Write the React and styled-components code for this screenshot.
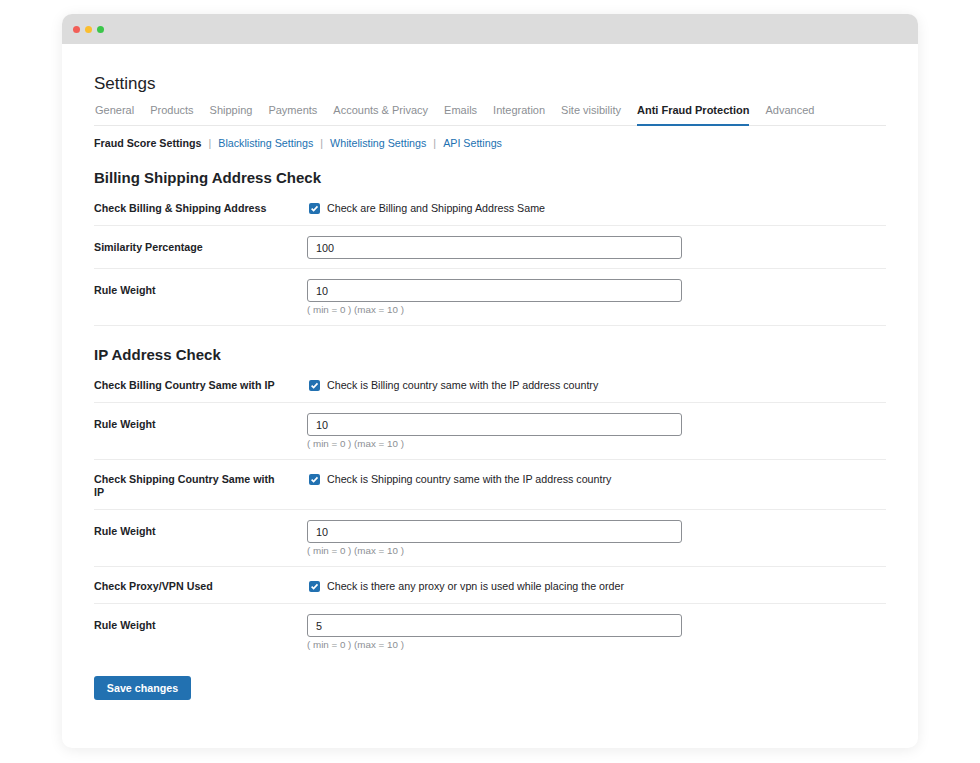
import React from "react";
import styled, { createGlobalStyle } from "styled-components";

const GlobalStyle = createGlobalStyle`
  html, body {
    margin: 0;
    padding: 0;
    background: #fff;
  }
  body {
    font-family: "Liberation Sans", Arial, sans-serif;
    color: #1d2327;
  }
  * {
    box-sizing: border-box;
  }
`;

const Page = styled.div`
  padding: 14px 62px 15px 62px;
`;

const Frame = styled.div`
  width: 856px;
  border-radius: 10px;
  background: #fff;
  overflow: hidden;
  box-shadow: 0 2px 14px rgba(0, 0, 0, 0.08);
`;

const TitleBar = styled.div`
  height: 30px;
  background: #dcdcdc;
  display: flex;
  align-items: center;
  gap: 5px;
  padding-left: 11px;
`;

const Dot = styled.span`
  width: 7px;
  height: 7px;
  border-radius: 50%;
  background: ${({ color }) => color};
`;

const Content = styled.div`
  padding: 29px 32px 48px 32px;
`;

const PageTitle = styled.h1`
  margin: 0;
  font-size: 17px;
  line-height: 22px;
  font-weight: 400;
  color: #1d2327;
`;

const Tabs = styled.nav`
  display: flex;
  gap: 16px;
  margin-top: 6px;
  padding-left: 1px;
  border-bottom: 1px solid #e8e8e8;
`;

const Tab = styled.span`
  font-size: 11px;
  line-height: 14px;
  padding: 2px 0 7px;
  color: ${({ active }) => (active ? "#1d2327" : "#8c8f94")};
  font-weight: ${({ active }) => (active ? 700 : 400)};
  border-bottom: 2px solid ${({ active }) => (active ? "#2271b1" : "transparent")};
  margin-bottom: -1px;
`;

const SubNav = styled.div`
  display: flex;
  align-items: center;
  margin-top: 10px;
  font-size: 10.7px;
  line-height: 14px;
`;

const SubLink = styled.span`
  color: ${({ current }) => (current ? "#1d2327" : "#2271b1")};
  font-weight: ${({ current }) => (current ? 700 : 400)};
`;

const Sep = styled.span`
  color: #a7aaad;
  padding: 0 7px;
`;

const SectionTitle = styled.h2`
  margin: ${({ first }) => (first ? "19px 0 2px" : "20px 0 2px")};
  font-size: 15px;
  line-height: 18px;
  font-weight: 700;
  color: #1d2327;
`;

const Row = styled.div`
  display: grid;
  grid-template-columns: 213px 375px;
  align-items: start;
  padding: ${({ check }) => (check ? "13px 0 10px" : "10px 0 9px")};
  border-bottom: ${({ last }) => (last ? "none" : "1px solid #ececec")};
`;

const Label = styled.div`
  font-size: 10.7px;
  font-weight: 700;
  line-height: 13px;
  padding-right: 24px;
  margin-top: ${({ check }) => (check ? "0" : "5px")};
`;

const CheckLine = styled.label`
  display: flex;
  align-items: center;
  gap: 7px;
  font-size: 10.7px;
  line-height: 13px;
  padding-left: 2px;
`;

const Box = styled.span`
  width: 11px;
  height: 11px;
  border-radius: 2px;
  background: #2271b1;
  display: flex;
  align-items: center;
  justify-content: center;
`;

const Field = styled.div`
  display: flex;
  flex-direction: column;
`;

const Input = styled.div`
  height: 23px;
  border: 1px solid #8c8f94;
  border-radius: 3px;
  padding: 0 8px;
  display: flex;
  align-items: center;
  font-size: 10.8px;
  color: #1d2327;
`;

const Help = styled.div`
  font-size: 9.8px;
  line-height: 12px;
  color: #8c8f94;
  margin-top: 2px;
`;

const SaveButton = styled.button`
  margin-top: 16px;
  width: 97px;
  height: 24px;
  border: none;
  border-radius: 3px;
  background: #2271b1;
  color: #fff;
  font-family: "Liberation Sans", Arial, sans-serif;
  font-weight: 700;
  font-size: 10.7px;
  padding: 0;
`;

const tabs = [
  "General",
  "Products",
  "Shipping",
  "Payments",
  "Accounts & Privacy",
  "Emails",
  "Integration",
  "Site visibility",
  "Anti Fraud Protection",
  "Advanced",
];

const Check = ({ children }) => (
  <CheckLine>
    <Box>
      <svg width="9" height="9" viewBox="0 0 10 10">
        <path d="M1.8 5.2 L4 7.4 L8.3 2.6" fill="none" stroke="#fff" strokeWidth="1.8" />
      </svg>
    </Box>
    {children}
  </CheckLine>
);

const CheckRow = ({ label, text, last }) => (
  <Row check last={last}>
    <Label check>{label}</Label>
    <Check>{text}</Check>
  </Row>
);

const InputRow = ({ label, value, help, last }) => (
  <Row last={last}>
    <Label>{label}</Label>
    <Field>
      <Input>{value}</Input>
      {help && <Help>( min = 0 ) (max = 10 )</Help>}
    </Field>
  </Row>
);

export default function App() {
  return (
    <>
      <GlobalStyle />
      <Page>
        <Frame>
          <TitleBar>
            <Dot color="#f25f58" />
            <Dot color="#fbbe2f" />
            <Dot color="#3bc64a" />
          </TitleBar>
          <Content>
            <PageTitle>Settings</PageTitle>
            <Tabs>
              {tabs.map((t) => (
                <Tab key={t} active={t === "Anti Fraud Protection"}>
                  {t}
                </Tab>
              ))}
            </Tabs>
            <SubNav>
              <SubLink current>Fraud Score Settings</SubLink>
              <Sep>|</Sep>
              <SubLink>Blacklisting Settings</SubLink>
              <Sep>|</Sep>
              <SubLink>Whitelisting Settings</SubLink>
              <Sep>|</Sep>
              <SubLink>API Settings</SubLink>
            </SubNav>

            <SectionTitle first>Billing Shipping Address Check</SectionTitle>
            <CheckRow
              label="Check Billing & Shipping Address"
              text="Check are Billing and Shipping Address Same"
            />
            <InputRow label="Similarity Percentage" value="100" />
            <InputRow label="Rule Weight" value="10" help />

            <SectionTitle>IP Address Check</SectionTitle>
            <CheckRow
              label="Check Billing Country Same with IP"
              text="Check is Billing country same with the IP address country"
            />
            <InputRow label="Rule Weight" value="10" help />
            <CheckRow
              label="Check Shipping Country Same with IP"
              text="Check is Shipping country same with the IP address country"
            />
            <InputRow label="Rule Weight" value="10" help />
            <CheckRow
              label="Check Proxy/VPN Used"
              text="Check is there any proxy or vpn is used while placing the order"
            />
            <InputRow label="Rule Weight" value="5" help last />

            <SaveButton>Save changes</SaveButton>
          </Content>
        </Frame>
      </Page>
    </>
  );
}
